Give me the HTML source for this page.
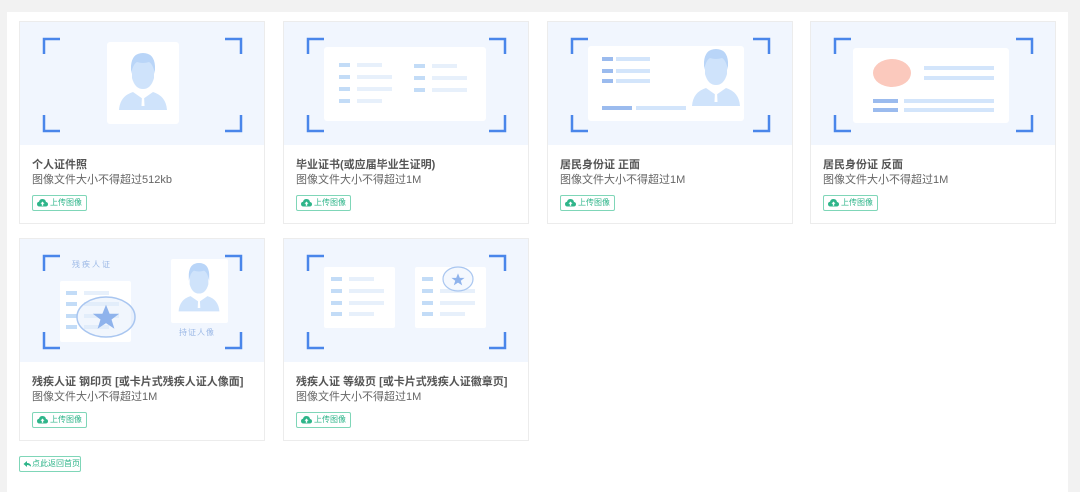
<!DOCTYPE html>
<html><head><meta charset="utf-8">
<style>
*{margin:0;padding:0;box-sizing:border-box}
body{width:1080px;height:484px;background:#f2f2f2;font-family:"Liberation Sans","Noto Sans CJK SC",sans-serif;overflow:hidden;position:relative}
.panel{position:absolute;left:7px;top:12px;width:1061px;height:480px;background:#fff}
.card{position:absolute;width:246px;height:203px;border:1px solid #ececec;background:#fff}
.card svg{display:block}
.t{position:absolute;left:12px;top:134px;font-size:11px;font-weight:bold;color:#555}
.s{position:absolute;left:12px;top:149px;font-size:11px;color:#666}
.b{position:absolute;left:12px;top:173px;height:16px;padding:0 4px;border:1px solid #7fd6b8;border-radius:2px;font-size:8px;color:#2fb58a;line-height:14px;display:flex;align-items:center;gap:2px;white-space:nowrap}
.ret{position:absolute;left:19px;top:456px;height:16px;width:62px;border:1px solid #7fd6b8;border-radius:2px;font-size:8px;color:#2fb58a;line-height:14px;padding-left:3px;white-space:nowrap;display:flex;align-items:center;gap:1px}
</style></head><body>
<div class="panel"></div>
<svg width="0" height="0" style="position:absolute">
<defs>
<g id="br" fill="none" stroke="#4a86ea" stroke-width="2.5">
<path d="M24 32V17H40"/><path d="M205 17H221V32"/><path d="M24 93V109H40"/><path d="M205 109H221V93"/>
</g>
<g id="person">
<path d="M-11 -16 Q-11 -29 0 -29 Q11 -29 11 -16 L11 -8 Q8 3 0 3 Q-8 3 -11 -8Z" fill="#cfe3fb"/>
<path d="M-12 -12 L-12 -20 Q-11 -33 0 -33 Q11 -33 12 -20 L12 -12 Q10 -22 6 -24 Q0 -22 -6 -24 Q-10 -22 -12 -12Z" fill="#b9d5f8"/>
<path d="M-24 24 Q-23 10 -10 6 L0 13 L10 6 Q23 10 24 24Z" fill="#cfe3fb"/>
<path d="M-1 9 L1 9 L1.5 20 L-1.5 20Z" fill="#fff"/>
</g>
<g id="stp"><path d="M0 -11 L3 -3.5 L11 -3.5 L4.6 1.3 L7 9 L0 4.3 L-7 9 L-4.6 1.3 L-11 -3.5 L-3 -3.5Z" fill="#8fb3ec"/></g>
<g id="cl"><path d="M2.5 7.5 Q0 7.5 0 5 Q0 3 2 2.7 Q2.7 0 5.5 0 Q8.5 0 9 3 Q11 3.3 11 5.3 Q11 7.5 8.5 7.5Z" fill="#2fb58a"/><path d="M5.5 2.5 L3.5 4.8 H4.8 V6.8 H6.2 V4.8 H7.5Z" fill="#fff"/></g>
</defs></svg>

<!-- card 1 -->
<div class="card" style="left:19px;top:21px">
<svg width="244" height="123"><rect width="244" height="123" fill="#f1f6fe"/><use href="#br"/>
<rect x="87" y="20" width="72" height="82" rx="3" fill="#fff"/>
<use href="#person" transform="translate(123 64)"/></svg>
<div class="t">个人证件照</div><div class="s">图像文件大小不得超过512kb</div>
<div class="b"><svg width="11" height="8"><use href="#cl"/></svg>上传图像</div></div>

<!-- card 2 -->
<div class="card" style="left:283px;top:21px">
<svg width="244" height="123"><rect width="244" height="123" fill="#f1f6fe"/><use href="#br"/>
<rect x="40" y="25" width="162" height="74" rx="3" fill="#fff"/>
<g fill="#c3dcf7"><rect x="55" y="41" width="11" height="4"/><rect x="55" y="53" width="11" height="4"/><rect x="55" y="65" width="11" height="4"/><rect x="55" y="77" width="11" height="4"/><rect x="130" y="42" width="11" height="4"/><rect x="130" y="54" width="11" height="4"/><rect x="130" y="66" width="11" height="4"/></g>
<g fill="#e7f0fb"><rect x="73" y="41" width="25" height="4"/><rect x="73" y="53" width="35" height="4"/><rect x="73" y="65" width="35" height="4"/><rect x="73" y="77" width="25" height="4"/><rect x="148" y="42" width="25" height="4"/><rect x="148" y="54" width="35" height="4"/><rect x="148" y="66" width="35" height="4"/></g>
</svg>
<div class="t">毕业证书(或应届毕业生证明)</div><div class="s">图像文件大小不得超过1M</div>
<div class="b"><svg width="11" height="8"><use href="#cl"/></svg>上传图像</div></div>

<!-- card 3 -->
<div class="card" style="left:547px;top:21px">
<svg width="244" height="123"><rect width="244" height="123" fill="#f1f6fe"/><use href="#br"/>
<rect x="40" y="24" width="156" height="75" rx="3" fill="#fff"/>
<g fill="#9bbbee"><rect x="54" y="35" width="11" height="4"/><rect x="54" y="47" width="11" height="4"/><rect x="54" y="57" width="11" height="4"/><rect x="54" y="84" width="30" height="4"/></g>
<g fill="#d3e5fb"><rect x="68" y="35" width="34" height="4"/><rect x="68" y="47" width="34" height="4"/><rect x="68" y="57" width="34" height="4"/><rect x="88" y="84" width="50" height="4"/></g>
<use href="#person" transform="translate(168 60)"/></svg>
<div class="t">居民身份证 正面</div><div class="s">图像文件大小不得超过1M</div>
<div class="b"><svg width="11" height="8"><use href="#cl"/></svg>上传图像</div></div>

<!-- card 4 -->
<div class="card" style="left:810px;top:21px">
<svg width="244" height="123"><rect width="244" height="123" fill="#f1f6fe"/><use href="#br"/>
<rect x="42" y="26" width="156" height="75" rx="3" fill="#fff"/>
<ellipse cx="81" cy="51" rx="19" ry="14" fill="#fbc9bd"/>
<g fill="#d3e5fb"><rect x="113" y="44" width="70" height="4"/><rect x="113" y="54" width="70" height="4"/><rect x="93" y="77" width="90" height="4"/><rect x="93" y="86" width="90" height="4"/></g>
<g fill="#9bbbee"><rect x="62" y="77" width="25" height="4"/><rect x="62" y="86" width="25" height="4"/></g>
</svg>
<div class="t">居民身份证 反面</div><div class="s">图像文件大小不得超过1M</div>
<div class="b"><svg width="11" height="8"><use href="#cl"/></svg>上传图像</div></div>

<!-- card 5 -->
<div class="card" style="left:19px;top:238px">
<svg width="244" height="123"><rect width="244" height="123" fill="#f1f6fe"/><use href="#br"/>
<text x="52" y="28" font-size="8" fill="#9bb8e6" letter-spacing="2" font-family="Noto Sans CJK SC,sans-serif">残疾人证</text>
<rect x="40" y="42" width="71" height="61" rx="2" fill="#fff"/>
<g fill="#c3dcf7"><rect x="46" y="52" width="11" height="4"/><rect x="46" y="63" width="11" height="4"/><rect x="46" y="75" width="11" height="4"/><rect x="46" y="86" width="11" height="4"/></g>
<g fill="#e7f0fb"><rect x="64" y="52" width="25" height="4"/><rect x="64" y="63" width="35" height="4"/><rect x="64" y="75" width="35" height="4"/><rect x="64" y="86" width="25" height="4"/></g>
<ellipse cx="86" cy="78" rx="29" ry="20" fill="rgba(220,232,250,0.4)" stroke="#a9c6f0" stroke-width="1.5"/>
<use href="#stp" transform="translate(86 79) scale(1.2)"/>
<rect x="151" y="20" width="57" height="64" rx="2" fill="#fff"/>
<use href="#person" transform="translate(179 52) scale(0.85)"/>
<text x="159" y="96" font-size="8" fill="#9bb8e6" letter-spacing="1" font-family="Noto Sans CJK SC,sans-serif">持证人像</text>
</svg>
<div class="t">残疾人证 钢印页 [或卡片式残疾人证人像面]</div><div class="s">图像文件大小不得超过1M</div>
<div class="b"><svg width="11" height="8"><use href="#cl"/></svg>上传图像</div></div>

<!-- card 6 -->
<div class="card" style="left:283px;top:238px">
<svg width="244" height="123"><rect width="244" height="123" fill="#f1f6fe"/><use href="#br"/>
<rect x="40" y="28" width="71" height="61" rx="2" fill="#fff"/>
<rect x="131" y="28" width="71" height="61" rx="2" fill="#fff"/>
<g fill="#c3dcf7"><rect x="47" y="38" width="11" height="4"/><rect x="47" y="50" width="11" height="4"/><rect x="47" y="62" width="11" height="4"/><rect x="47" y="73" width="11" height="4"/><rect x="138" y="38" width="11" height="4"/><rect x="138" y="50" width="11" height="4"/><rect x="138" y="62" width="11" height="4"/><rect x="138" y="73" width="11" height="4"/></g>
<g fill="#e7f0fb"><rect x="65" y="38" width="25" height="4"/><rect x="65" y="50" width="35" height="4"/><rect x="65" y="62" width="35" height="4"/><rect x="65" y="73" width="25" height="4"/><rect x="156" y="50" width="35" height="4"/><rect x="156" y="62" width="35" height="4"/><rect x="156" y="73" width="25" height="4"/></g>
<ellipse cx="174" cy="40" rx="15" ry="12" fill="rgba(240,245,253,0.7)" stroke="#a9c6f0" stroke-width="1.2"/>
<use href="#stp" transform="translate(174 41) scale(0.6)"/>
</svg>
<div class="t">残疾人证 等级页 [或卡片式残疾人证徽章页]</div><div class="s">图像文件大小不得超过1M</div>
<div class="b"><svg width="11" height="8"><use href="#cl"/></svg>上传图像</div></div>

<div class="ret"><svg width="9" height="8"><path d="M4 1 L0.5 4 L4 7 V5 Q7 5 8.5 7.5 Q8 3 4 3Z" fill="#2fb58a"/></svg>点此返回首页</div>
</body></html>
